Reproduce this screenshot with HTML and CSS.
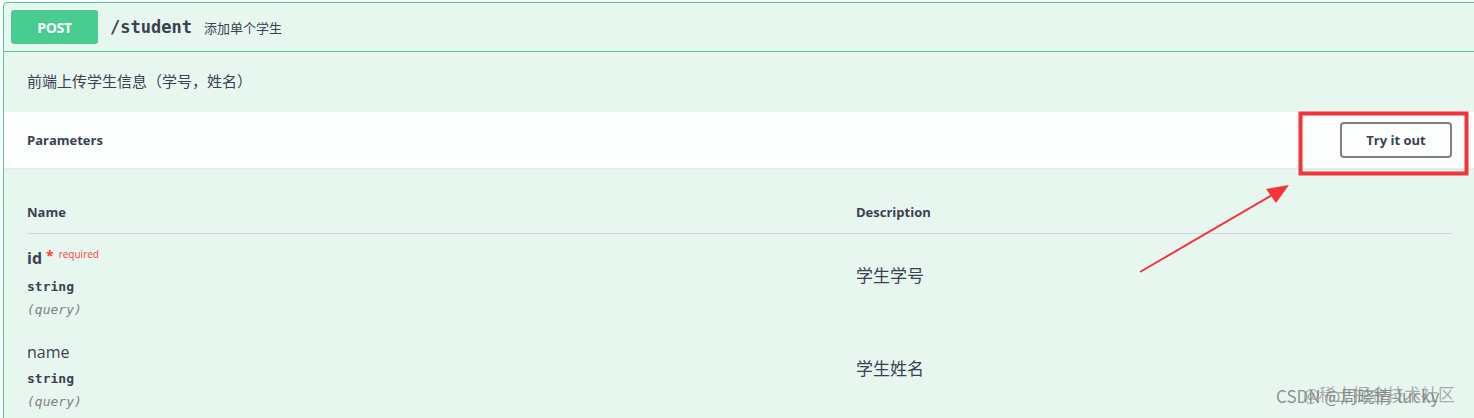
FILE: index.html
```html
<!DOCTYPE html>
<html lang="zh">
<head>
<meta charset="utf-8">
<title>POST /student</title>
<link rel="stylesheet" href="styles.css">
</head>
<body>
<div class="opblock">
  <div class="summary">
    <span class="method">POST</span>
    <span class="path">/student</span>
    <span class="summary-desc">添加单个学生</span>
  </div>
  <div class="description">前端上传学生信息（学号，姓名）</div>
  <div class="section-header">
    <h4 class="section-title">Parameters</h4>
    <button class="try-out">Try it out</button>
  </div>
  <div class="params">
    <div class="params-head">
      <div class="col-name">Name</div>
      <div class="col-desc">Description</div>
    </div>
    <div class="param-row row-first">
      <div class="col-name">
        <div class="param-name required">id<span class="star">*</span><span class="req">required</span></div>
        <div class="param-type">string</div>
        <div class="param-in">(query)</div>
      </div>
      <div class="col-desc desc-text">学生学号</div>
    </div>
    <div class="param-row">
      <div class="col-name">
        <div class="param-name">name</div>
        <div class="param-type">string</div>
        <div class="param-in">(query)</div>
      </div>
      <div class="col-desc desc-text">学生姓名</div>
    </div>
  </div>
</div>

<svg class="annotation" width="1474" height="418" viewBox="0 0 1474 418">
  <rect x="1300.5" y="113.5" width="166" height="60" fill="none" stroke="#f2353b" stroke-width="4"/>
  <line x1="1140" y1="272" x2="1272" y2="195" stroke="#f2353b" stroke-width="2"/>
  <polygon points="1289,185 1266,189 1276,203" fill="#f2353b"/>
</svg>

<div class="watermark">
  <span class="wm wm-a">CSDN @周晓情-lucky</span>
  <span class="wm wm-b">@稀土掘金技术社区</span>
</div>
</body>
</html>
```

FILE: styles.css
```css
* { box-sizing: border-box; }
html, body { margin: 0; padding: 0; }
body {
  width: 1474px;
  height: 418px;
  overflow: hidden;
  background: #ffffff;
  font-family: "Open Sans", "Noto Sans CJK SC", sans-serif;
  color: #3b4151;
  position: relative;
}

.opblock {
  margin: 2px 0 0 3px;
  width: 1490px;
  height: 430px;
  border: 1px solid #49cc90;
  border-radius: 4px;
  background: #e8f6f0;
}

.summary {
  display: flex;
  align-items: center;
  height: 49px;
  padding: 0 7px;
  border-bottom: 1px solid #49cc90;
}
.method {
  width: 87px;
  height: 34px;
  border-radius: 3px;
  background: #49cc90;
  color: #fff;
  font-family: "Open Sans", sans-serif;
  font-weight: 700;
  font-size: 14px;
  display: flex;
  align-items: center;
  justify-content: center;
  letter-spacing: -0.3px;
}
.path {
  margin-left: 12px;
  font-family: "DejaVu Sans Mono", monospace;
  font-size: 17px;
  font-weight: 600;
  color: #3b4151;
}
.summary-desc {
  margin-left: 12px;
  font-family: "Noto Sans CJK SC", sans-serif;
  font-size: 13px;
  color: #3b4151;
}

.description {
  height: 60px;
  display: flex;
  align-items: center;
  padding: 0 23px 4px;
  font-family: "Noto Sans CJK SC", sans-serif;
  font-size: 15px;
  color: #3b4151;
}

.section-header {
  height: 56px;
  display: flex;
  align-items: center;
  justify-content: space-between;
  padding: 0 40px 0 23px;
  background: rgba(255, 255, 255, 0.85);
  box-shadow: 0 1px 2px rgba(0, 0, 0, 0.05);
}
.section-title {
  margin: 0;
  font-size: 13px;
  font-weight: 700;
  color: #3b4151;
}
.try-out {
  width: 112px;
  height: 36px;
  border: 2px solid #808080;
  border-radius: 4px;
  background: transparent;
  font-family: "Open Sans", sans-serif;
  font-weight: 700;
  font-size: 13px;
  color: #3b4151;
  padding: 0;
}

.params {
  padding: 0 40px 0 23px;
}
.params-head {
  display: grid;
  grid-template-columns: 829px 1fr;
  height: 66px;
  align-items: end;
  padding-bottom: 12px;
  border-bottom: 1px solid #cfd8d4;
  font-size: 13px;
  font-weight: 700;
  color: #3b4151;
}
.param-row {
  display: grid;
  grid-template-columns: 829px 1fr;
  align-items: start;
  padding-top: 13px;
}
.row-first { height: 94px; }

.param-name {
  font-size: 16px;
  line-height: 22px;
  height: 22px;
  color: #3b4151;
  font-weight: 400;
}
.param-name.required { font-weight: 700; }
.star {
  color: #f93e3e;
  font-size: 14px;
  margin-left: 4px;
  position: relative;
  top: -3px;
}
.req {
  color: #f93e3e;
  font-size: 10px;
  font-weight: 400;
  margin-left: 5px;
  position: relative;
  top: -6px;
}
.param-type {
  margin-top: 7px;
  font-family: "DejaVu Sans Mono", monospace;
  font-weight: 700;
  font-size: 13px;
  line-height: 18px;
  color: #3b4151;
}
.row-first .param-type { margin-top: 9px; }
.param-in {
  margin-top: 6px;
  font-family: "DejaVu Sans Mono", monospace;
  font-style: italic;
  font-size: 13px;
  line-height: 16px;
  color: #808080;
}
.desc-text {
  font-family: "Noto Sans CJK SC", sans-serif;
  font-size: 17px;
  line-height: 24px;
  color: #3b4151;
  padding-top: 15px;
}
.row-first .desc-text { padding-top: 16px; }

.annotation {
  position: absolute;
  left: 0;
  top: 0;
  pointer-events: none;
}

.watermark {
  position: absolute;
  left: 1276px;
  top: 381px;
  width: 190px;
  height: 30px;
  pointer-events: none;
}
.wm {
  position: absolute;
  white-space: nowrap;
  font-family: "Noto Sans CJK SC", sans-serif;
  color: rgba(110, 110, 110, 0.75);
}
.wm-a { left: 0; top: 2px; font-size: 17px; }
.wm-b { left: 27px; top: 0; font-size: 17px; color: rgba(120, 120, 120, 0.6); }
```
